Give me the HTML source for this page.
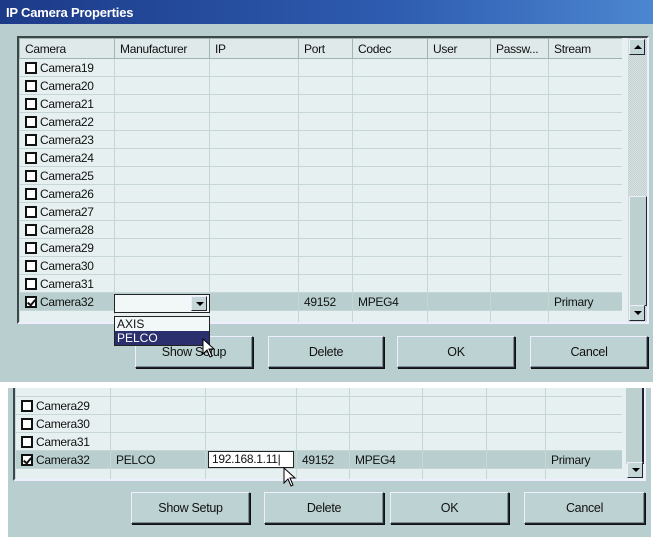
<!DOCTYPE html>
<html><head><style>
*{margin:0;padding:0;box-sizing:border-box}
body{width:658px;height:544px;background:#fff;position:relative;overflow:hidden;font-family:"Liberation Sans Narrow","Liberation Sans",sans-serif;font-size:12px;color:#111}
.abs{position:absolute}
.panel{background:#b9cfcf}
.title{left:0;top:0;width:653px;height:24px;background:linear-gradient(90deg,#1c3a88,#2e5cb0 60%,#4c86d0);color:#fff;font:bold 13px "Liberation Sans",sans-serif;padding:5px 0 0 6px;letter-spacing:-.2px}
table{border-collapse:collapse;table-layout:fixed;position:absolute}
td{border:1px solid #c6d6d6;background:#e7f0f0;height:18px;padding:0 0 0 5px;white-space:nowrap;overflow:hidden;font-size:12px;letter-spacing:-.3px}
tr.h td{background:#dfe9e9;border-color:#9fb4b4;height:20px}
tr.s td{background:#b9cfcf}
tr.z td{font-size:0;line-height:0}
tr.z9 td{height:9px;font-size:0;line-height:0}
.clip{position:absolute;overflow:hidden}
.cb{display:inline-block;width:12px;height:12px;border:2px solid #111;background:#fff;vertical-align:-2px;margin-right:3px;position:relative}
.cb.c::after{content:"";position:absolute;left:2px;top:0px;width:3px;height:6px;border:solid #111;border-width:0 2px 2px 0;transform:rotate(40deg)}
.btn{position:absolute;background:#bdd2d2;border:1px solid #223;border-top-color:#eef;border-left-color:#eef;box-shadow:1px 1px 0 #111,inset -1px -1px 0 #7a9090;text-align:center;font-size:12.5px;letter-spacing:-.3px}
.sb{position:absolute;background:repeating-conic-gradient(#d8e2e2 0 25%,#c2d0d0 0 50%) 0 0/2px 2px}
.arr{position:absolute;width:16px;height:16px;background:#c4d6d6;border:1px solid #eef;border-right-color:#223;border-bottom-color:#223}
.arr::after{content:"";position:absolute;left:4px;border-left:4px solid transparent;border-right:4px solid transparent}
.up::after{top:5px;border-bottom:4px solid #000}
.dn::after{top:5px;border-top:4px solid #000}
</style></head><body>
<div class="abs panel" style="left:0;top:0;width:653px;height:382px"></div>
<div class="abs title">IP Camera Properties</div>
<div class="abs" style="left:17px;top:36px;width:632px;height:288px;border:2px solid #3a4848;border-right-color:#eef;border-bottom-color:#eef;background:#e7f0f0"></div>
<div class="clip" style="left:19px;top:38px;width:609px;height:284px">
<table style="left:0;top:0;width:609px">
<colgroup><col style="width:95px"><col style="width:95px"><col style="width:89px"><col style="width:54px"><col style="width:75px"><col style="width:63px"><col style="width:58px"><col style="width:80px"></colgroup>
<tr class="h"><td>Camera</td><td>Manufacturer</td><td>IP</td><td>Port</td><td>Codec</td><td>User</td><td>Passw...</td><td>Stream</td></tr>
<tr><td><span class="cb"></span>Camera19</td><td></td><td></td><td></td><td></td><td></td><td></td><td></td></tr>
<tr><td><span class="cb"></span>Camera20</td><td></td><td></td><td></td><td></td><td></td><td></td><td></td></tr>
<tr><td><span class="cb"></span>Camera21</td><td></td><td></td><td></td><td></td><td></td><td></td><td></td></tr>
<tr><td><span class="cb"></span>Camera22</td><td></td><td></td><td></td><td></td><td></td><td></td><td></td></tr>
<tr><td><span class="cb"></span>Camera23</td><td></td><td></td><td></td><td></td><td></td><td></td><td></td></tr>
<tr><td><span class="cb"></span>Camera24</td><td></td><td></td><td></td><td></td><td></td><td></td><td></td></tr>
<tr><td><span class="cb"></span>Camera25</td><td></td><td></td><td></td><td></td><td></td><td></td><td></td></tr>
<tr><td><span class="cb"></span>Camera26</td><td></td><td></td><td></td><td></td><td></td><td></td><td></td></tr>
<tr><td><span class="cb"></span>Camera27</td><td></td><td></td><td></td><td></td><td></td><td></td><td></td></tr>
<tr><td><span class="cb"></span>Camera28</td><td></td><td></td><td></td><td></td><td></td><td></td><td></td></tr>
<tr><td><span class="cb"></span>Camera29</td><td></td><td></td><td></td><td></td><td></td><td></td><td></td></tr>
<tr><td><span class="cb"></span>Camera30</td><td></td><td></td><td></td><td></td><td></td><td></td><td></td></tr>
<tr><td><span class="cb"></span>Camera31</td><td></td><td></td><td></td><td></td><td></td><td></td><td></td></tr>
<tr class="s"><td><span class="cb c"></span>Camera32</td><td></td><td></td><td>49152</td><td>MPEG4</td><td></td><td></td><td>Primary</td></tr>
<tr class="z"><td></td><td></td><td></td><td></td><td></td><td></td><td></td><td></td></tr>
</table></div>
<div class="abs" style="left:622px;top:38px;width:6px;height:284px;background:#e7f0f0"></div>
<div class="sb" style="left:628px;top:38px;width:19px;height:284px"></div>
<div class="arr up" style="left:629px;top:39px"></div>
<div class="abs" style="left:629px;top:196px;width:18px;height:110px;background:#bcd0d0;border:1px solid #eef;border-right-color:#223;border-bottom-color:#223"></div>
<div class="arr dn" style="left:629px;top:305px"></div>
<!-- dropdown -->
<div class="abs" style="left:114px;top:294px;width:96px;height:19px;background:#f2f7f7;border:1px solid #222"></div>
<div class="arr dn" style="left:191px;top:296px;height:15px"></div>
<div class="btn" style="left:135px;top:336px;width:118px;height:32px;line-height:30px">Show Setup</div>
<div class="abs" style="left:114px;top:316px;width:96px;height:30px;background:#f2f7f7;border:1px solid #222;font-size:12px;line-height:14px">
<div style="padding-left:2px">AXIS</div><div style="background:#2b2f6e;color:#fff;padding-left:2px">PELCO</div></div>
<svg class="abs" style="left:202px;top:338px" width="14" height="22" viewBox="0 0 14 22"><path d="M1 1 L1 16 L5 12 L8 19 L10 18 L7 11 L12 11 Z" fill="#fff" stroke="#000" stroke-width="1"/></svg>
<div class="btn" style="left:268px;top:336px;width:116px;height:32px;line-height:30px">Delete</div>
<div class="btn" style="left:397px;top:336px;width:118px;height:32px;line-height:30px">OK</div>
<div class="btn" style="left:530px;top:336px;width:118px;height:32px;line-height:30px">Cancel</div>

<!-- bottom panel -->
<div class="abs panel" style="left:8px;top:388px;width:643px;height:149px"></div>
<div class="abs" style="left:13px;top:388px;width:633px;height:93px;border:2px solid #3a4848;border-top:none;border-right-color:#eef;border-bottom-color:#eef;background:#e7f0f0"></div>
<div class="clip" style="left:15px;top:388px;width:607px;height:91px">
<table style="left:0;top:-1px;width:607px">
<colgroup><col style="width:95px"><col style="width:95px"><col style="width:91px"><col style="width:53px"><col style="width:73px"><col style="width:64px"><col style="width:59px"><col style="width:77px"></colgroup>
<tr class="z9"><td></td><td></td><td></td><td></td><td></td><td></td><td></td><td></td></tr>
<tr><td><span class="cb"></span>Camera29</td><td></td><td></td><td></td><td></td><td></td><td></td><td></td></tr>
<tr><td><span class="cb"></span>Camera30</td><td></td><td></td><td></td><td></td><td></td><td></td><td></td></tr>
<tr><td><span class="cb"></span>Camera31</td><td></td><td></td><td></td><td></td><td></td><td></td><td></td></tr>
<tr class="s"><td><span class="cb c"></span>Camera32</td><td>PELCO</td><td style="padding:0"><div style="margin:0 2px;background:#fff;border:1px solid #222;height:17px;padding-left:3px;line-height:15px">192.168.1.11|</div></td><td>49152</td><td>MPEG4</td><td></td><td></td><td>Primary</td></tr>
<tr class="z"><td></td><td></td><td></td><td></td><td></td><td></td><td></td><td></td></tr>
</table></div>
<div class="abs" style="left:622px;top:388px;width:6px;height:91px;background:#e7f0f0"></div>
<div class="abs" style="left:626px;top:388px;width:18px;height:76px;background:#bcd0d0;border-right:2px solid #223"></div>
<div class="arr dn" style="left:627px;top:462px"></div>
<svg class="abs" style="left:283px;top:467px" width="14" height="22" viewBox="0 0 14 22"><path d="M1 1 L1 16 L5 12 L8 19 L10 18 L7 11 L12 11 Z" fill="#fff" stroke="#000" stroke-width="1"/></svg>
<div class="btn" style="left:131px;top:492px;width:119px;height:32px;line-height:30px">Show Setup</div>
<div class="btn" style="left:264px;top:492px;width:120px;height:32px;line-height:30px">Delete</div>
<div class="btn" style="left:390px;top:492px;width:119px;height:32px;line-height:30px">OK</div>
<div class="btn" style="left:524px;top:492px;width:121px;height:32px;line-height:30px">Cancel</div>
</body></html>
